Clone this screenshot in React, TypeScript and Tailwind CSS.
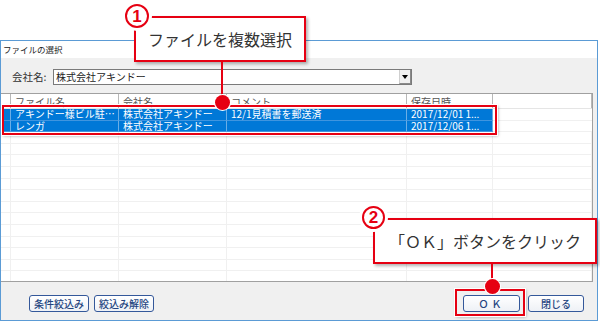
const RED = "border-[#e60012]";

type Row = { name: string; company: string; comment: string; date: string };

const rows: Row[] = [
  { name: "アキンドー様ビル駐…", company: "株式会社アキンドー", comment: "12/1見積書を郵送済", date: "2017/12/01 1..." },
  { name: "レンガ", company: "株式会社アキンドー", comment: "", date: "2017/12/06 1..." },
];

const cols = "grid grid-cols-[10px_108px_108px_180px_86px_1fr]";

const NumberBadge = ({ n, className }: { n: string; className: string }) => (
  <div
    className={`absolute flex items-center justify-center rounded-full bg-white border-2 ${RED} text-[#e60012] font-bold text-[17px] leading-none shadow-[0_0_0_3px_#fff] ${className}`}
    style={{ fontFamily: '"Liberation Sans", Arial, sans-serif' }}
  >
    {n}
  </div>
);

const Callout = ({ text, className }: { text: string; className: string }) => (
  <div
    className={`absolute flex items-center justify-center bg-white border-2 ${RED} text-[16px] text-[#333] shadow-[2px_2px_3px_rgba(0,0,0,0.3)] ${className}`}
  >
    {text}
  </div>
);

const Button = ({ label }: { label: string }) => (
  <button className="h-[17px] px-[4px] rounded-[3px] border-[1.5px] border-[#34589a] bg-gradient-to-b from-white to-[#eef1f6] text-[10px] leading-none font-medium text-[#23447f] whitespace-nowrap">
    {label}
  </button>
);

export default function App() {
  return (
    <div
      className="relative w-[600px] h-[323px] bg-white overflow-hidden"
      style={{ fontFamily: '"Noto Sans CJK JP", "Noto Sans", sans-serif' }}
    >
      {/* dialog window */}
      <div className="mt-[40px] w-[598px] h-[281px] border border-[#5b9bd5] flex flex-col">
        <div className="h-[17px] bg-white flex items-center pl-[2px] text-[8.5px] text-[#222]">ファイルの選択</div>

        <div className="flex-1 bg-[#f0f0f0] flex flex-col">
          <div className="mt-[11px] h-[16px] flex items-center pl-[11px]">
            <span className="w-[41px] text-[10.5px] text-[#333] leading-none">会社名:</span>
            <div className="w-[359px] h-[16px] bg-white border border-[#7a7a7a] flex items-center">
              <span className="flex-1 pl-[2px] text-[10px] text-[#222] leading-none">株式会社アキンドー</span>
              <div className="w-[12px] h-full bg-[#f0f0f0] border-l border-[#cfcfcf] border-r border-b border-r-[#8a8a8a] border-b-[#8a8a8a] flex items-center justify-center">
                <div className="w-0 h-0 border-l-[3px] border-r-[3px] border-t-[4px] border-l-transparent border-r-transparent border-t-black" />
              </div>
            </div>
          </div>

          {/* list */}
          <div className="mt-[8px] mr-[4px] h-[189px] bg-white border-y border-r border-[#a0a0a0] overflow-hidden">
            <div className={`${cols} h-[15px] border-b border-[#e5e5e5] text-[10px] text-[#555]`}>
              {["", "ファイル名", "会社名", "コメント", "保存日時", ""].map((h, i) => (
                <div key={i} className="border-r border-[#b8b8b8] pl-[4px] pt-[1px] leading-[13px] whitespace-nowrap overflow-hidden">
                  {h}
                </div>
              ))}
            </div>
            {rows.map((r, i) => (
              <div key={i} className={`${cols} h-[11.6px] text-[10px] leading-[10.6px]`}>
                {["", r.name, r.company, r.comment, r.date].map((c, j) => (
                  <div
                    key={j}
                    className="bg-[#0078d7] text-white border-r border-[#6aaee6] border-b border-b-[#3f95df] pl-[4px] whitespace-nowrap overflow-hidden"
                  >
                    {c}
                  </div>
                ))}
                <div className="border-b border-[#f0f0f0]" />
              </div>
            ))}
            {Array.from({ length: 14 }).map((_, i) => (
              <div key={i} className={`${cols} h-[11.6px]`}>
                {Array.from({ length: 6 }).map((_, j) => (
                  <div key={j} className="border-r border-b border-[#f0f0f0]" />
                ))}
              </div>
            ))}
          </div>

          <div className="mt-[13px] flex justify-between pl-[28px] pr-[13px]">
            <div className="flex gap-[5px]">
              <Button label="条件絞込み" />
              <Button label="絞込み解除" />
            </div>
            <div className="flex gap-[8px]">
              <button className="w-[57px] h-[17px] rounded-[3px] border-[1.5px] border-[#34589a] bg-gradient-to-b from-white to-[#eef1f6] text-[10px] leading-none font-medium text-[#23447f] tracking-[3px]">
                ＯＫ
              </button>
              <button className="w-[56px] h-[17px] rounded-[3px] border-[1.5px] border-[#34589a] bg-gradient-to-b from-white to-[#eef1f6] text-[10px] leading-none font-medium text-[#23447f]">
                閉じる
              </button>
            </div>
          </div>
        </div>
      </div>

      {/* annotation overlays */}
      <div className={`absolute left-[2px] top-[105px] w-[495px] h-[30px] border-2 ${RED} shadow-[0_0_0_1px_#fff,1px_1px_3px_rgba(0,0,0,0.35)]`} />
      <div className={`absolute left-[455px] top-[289px] w-[70px] h-[27px] border-2 ${RED} shadow-[0_0_0_1px_#fff,1px_1px_3px_rgba(0,0,0,0.35)]`} />

      <Callout text="ファイルを複数選択" className="left-[134px] top-[16px] w-[172px] h-[46px]" />
      <div className="absolute left-[221px] top-[62px] w-[2px] h-[36px] bg-[#e60012]" />
      <div className="absolute left-[215px] top-[95px] w-[15px] h-[15px] rounded-full bg-[#e60012] shadow-[0_0_0_1px_#fff]" />
      <NumberBadge n="1" className="left-[125px] top-[4px] w-[24px] h-[24px]" />

      <Callout text="「ＯＫ」ボタンをクリック" className="left-[373px] top-[218px] w-[224px] h-[46px]" />
      <div className="absolute left-[491px] top-[264px] w-[2px] h-[20px] bg-[#e60012]" />
      <div className="absolute left-[485px] top-[279px] w-[15px] h-[15px] rounded-full bg-[#e60012] shadow-[0_0_0_1px_#fff]" />
      <NumberBadge n="2" className="left-[362px] top-[206px] w-[23px] h-[23px]" />
    </div>
  );
}
